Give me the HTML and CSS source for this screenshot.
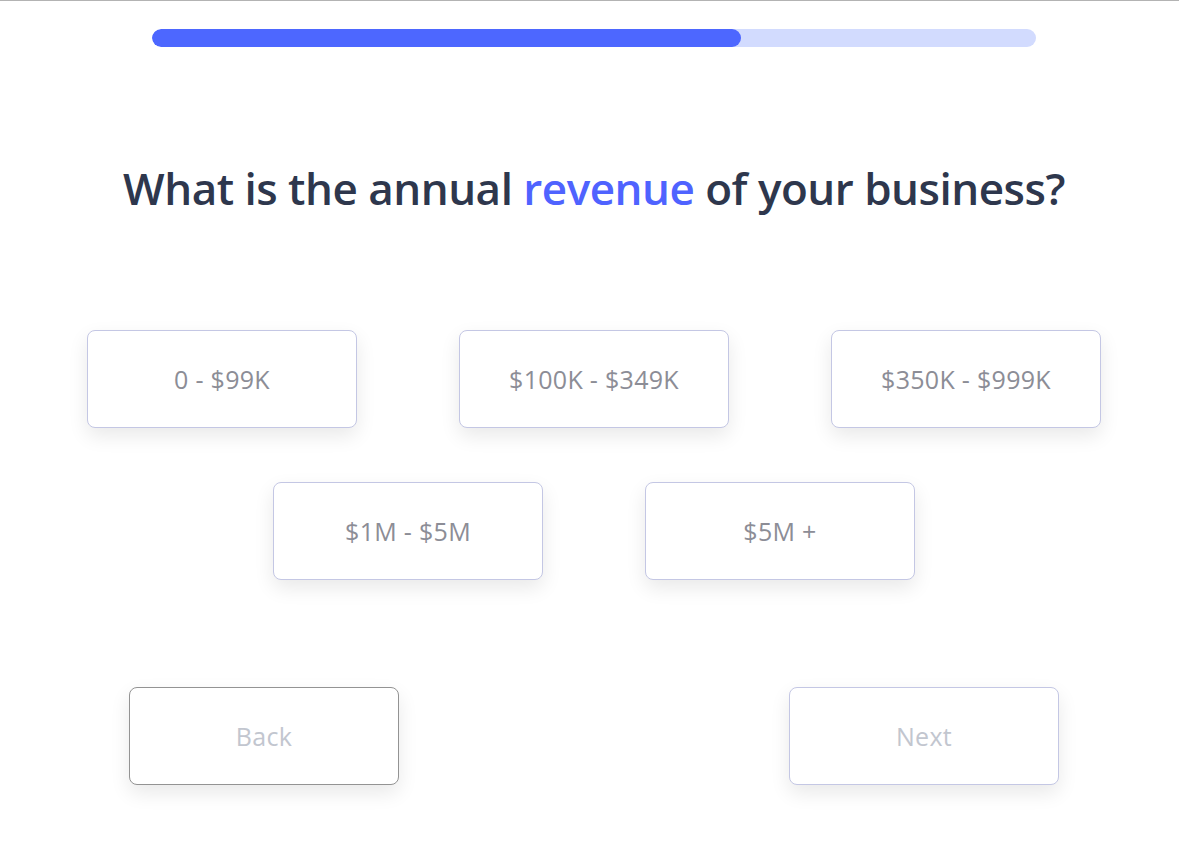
FILE: index.html
```html
<!DOCTYPE html>
<html lang="en">
<head>
<meta charset="utf-8">
<title>Annual revenue</title>
<link rel="stylesheet" href="styles.css">
</head>
<body>
<div class="page">
  <div class="progress"><div class="progress-fill" style="width: 66.6%"></div></div>
  <h1 class="question">What is the annual <span class="accent">revenue</span> of your business?</h1>
  <div class="options">
    <div class="row">
      <button class="option">0 - $99K</button>
      <button class="option">$100K - $349K</button>
      <button class="option">$350K - $999K</button>
    </div>
    <div class="row">
      <button class="option">$1M - $5M</button>
      <button class="option">$5M +</button>
    </div>
  </div>
  <div class="nav">
    <button class="nav-btn back">Back</button>
    <button class="nav-btn next">Next</button>
  </div>
</div>
</body>
</html>
```
FILE: styles.css
```css
html, body {
  margin: 0;
  padding: 0;
  background: #ffffff;
}
body {
  border-top: 1px solid #b3b3b3;
  font-family: "Open Sans", "Liberation Sans", sans-serif;
}
.page {
  width: 1188px;
  padding-bottom: 60px;
  display: flex;
  flex-direction: column;
  align-items: center;
}
.progress {
  margin-top: 28px;
  width: 884px;
  height: 18px;
  border-radius: 9px;
  background: #d2dbfe;
  overflow: hidden;
}
.progress-fill {
  height: 100%;
  border-radius: 9px;
  background: #4d67ff;
}
.question {
  margin: 111px 0 0 0;
  font-size: 44px;
  font-weight: 600;
  color: #2e374d;
  letter-spacing: -0.5px;
  line-height: 60px;
}
.accent {
  color: #4f63ff;
}
.options {
  margin-top: 112px;
  display: flex;
  flex-direction: column;
  gap: 54px;
}
.row {
  display: flex;
  justify-content: center;
  gap: 102px;
}
button {
  font-family: inherit;
  cursor: pointer;
}
.option, .nav-btn {
  width: 270px;
  height: 98px;
  background: #ffffff;
  border: 1px solid #c4c7e4;
  border-radius: 8px;
  box-shadow: 0 8px 20px rgba(0, 0, 0, 0.09);
  font-size: 25px;
  letter-spacing: 0.3px;
  color: #8c8d96;
}
.nav {
  margin-top: 107px;
  display: flex;
  gap: 390px;
}
.nav-btn {
  color: #c2c6cf;
}
.back {
  border-color: #939393;
}
```
